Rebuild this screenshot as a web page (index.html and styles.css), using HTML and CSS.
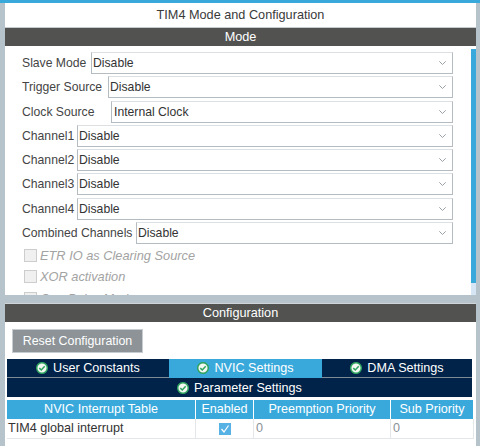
FILE: index.html
```html
<!DOCTYPE html>
<html lang="en">
<head>
<meta charset="utf-8">
<title>TIM4 Mode and Configuration</title>
<link rel="stylesheet" href="styles.css">
</head>
<body>
<div class="window">
  <section class="mode-panel">
    <h1 class="title">TIM4 Mode and Configuration</h1>
    <h2 class="bar">Mode</h2>
    <div class="scroller">
      <div class="form">
        <div class="row"><label class="lbl w-slave">Slave Mode</label><div class="select">Disable<svg class="chev" viewBox="0 0 7 4"><path d="M.3.3 3.500 3.500 6.700.3"/></svg></div></div>
        <div class="row"><label class="lbl w-trigger">Trigger Source</label><div class="select">Disable<svg class="chev" viewBox="0 0 7 4"><path d="M.3.3 3.500 3.500 6.700.3"/></svg></div></div>
        <div class="row"><label class="lbl w-clock">Clock Source</label><div class="select inset">Internal Clock<svg class="chev" viewBox="0 0 7 4"><path d="M.3.3 3.500 3.500 6.700.3"/></svg></div></div>
        <div class="row"><label class="lbl w-channel">Channel1</label><div class="select">Disable<svg class="chev" viewBox="0 0 7 4"><path d="M.3.3 3.500 3.500 6.700.3"/></svg></div></div>
        <div class="row"><label class="lbl w-channel">Channel2</label><div class="select">Disable<svg class="chev" viewBox="0 0 7 4"><path d="M.3.3 3.500 3.500 6.700.3"/></svg></div></div>
        <div class="row"><label class="lbl w-channel">Channel3</label><div class="select">Disable<svg class="chev" viewBox="0 0 7 4"><path d="M.3.3 3.500 3.500 6.700.3"/></svg></div></div>
        <div class="row"><label class="lbl w-channel">Channel4</label><div class="select">Disable<svg class="chev" viewBox="0 0 7 4"><path d="M.3.3 3.500 3.500 6.700.3"/></svg></div></div>
        <div class="row"><label class="lbl w-combined">Combined Channels</label><div class="select">Disable<svg class="chev" viewBox="0 0 7 4"><path d="M.3.3 3.500 3.500 6.700.3"/></svg></div></div>
        <div class="check"><span class="box"></span>ETR IO as Clearing Source</div>
        <div class="check"><span class="box"></span>XOR activation</div>
        <div class="check"><span class="box"></span>One Pulse Mode</div>
      </div>
      <div class="scrollbar"><div class="thumb"></div></div>
    </div>
  </section>
  <section class="config-panel">
    <h2 class="bar">Configuration</h2>
    <button class="reset">Reset Configuration</button>
    <div class="tabs">
      <div class="tab"><svg class="ok" viewBox="0 0 12 12"><circle cx="6" cy="6" r="5.300"/><path d="M3.300 6.100 5.300 8 8.700 4.300"/></svg>User Constants</div>
      <div class="tab active"><svg class="ok" viewBox="0 0 12 12"><circle cx="6" cy="6" r="5.300"/><path d="M3.300 6.100 5.300 8 8.700 4.300"/></svg>NVIC Settings</div>
      <div class="tab"><svg class="ok" viewBox="0 0 12 12"><circle cx="6" cy="6" r="5.300"/><path d="M3.300 6.100 5.300 8 8.700 4.300"/></svg>DMA Settings</div>
      <div class="tab wide"><svg class="ok" viewBox="0 0 12 12"><circle cx="6" cy="6" r="5.300"/><path d="M3.300 6.100 5.300 8 8.700 4.300"/></svg>Parameter Settings</div>
    </div>
    <div class="table">
      <div class="th">NVIC Interrupt Table</div>
      <div class="th">Enabled</div>
      <div class="th">Preemption Priority</div>
      <div class="th">Sub Priority</div>
      <div class="td">TIM4 global interrupt</div>
      <div class="td center"><svg class="tick" viewBox="0 0 12 12"><rect width="12" height="12"/><path d="M2.500 6 5 9 9.500 2.500"/></svg></div>
      <div class="td num">0</div>
      <div class="td num">0</div>
    </div>
  </section>
</div>
</body>
</html>
```
FILE: styles.css
```css
* { box-sizing: border-box; }
html, body { margin: 0; padding: 0; }
body {
  width: 480px;
  height: 446px;
  overflow: hidden;
  background: #b7c3ca;
  font-family: "Liberation Sans", Arial, sans-serif;
  font-size: 12.6px;
  color: #333;
}
.window {
  display: flex;
  flex-direction: column;
  height: 446px;
  padding: 3px 4px 0 5px;
  background: linear-gradient(#39a9dc 3px, #b7c3ca 3px);
}
.mode-panel { background: #fff; height: 292px; display: flex; flex-direction: column; }
.title {
  margin: 0;
  height: 25px;
  line-height: 24px;
  text-align: center;
  font-size: 12.7px;
  font-weight: 400;
  color: #3a3a3a;
  border-bottom: 1px solid #c4ccd0;
}
.bar {
  margin: 0;
  height: 18px;
  line-height: 18px;
  text-align: center;
  font-size: 12.7px;
  font-weight: 400;
  color: #fff;
  background: #525351;
}
.scroller { flex: 1; position: relative; overflow: hidden; display: flex; }
.form { flex: 1; padding: 6px 18px 0 17px; display: flex; flex-direction: column; min-height: 0; }
.row { display: flex; align-items: center; height: 22px; margin-bottom: 2.300px; flex: none; font-size: 12.2px; }
.lbl { color: #444; white-space: nowrap; flex: none; }
.w-slave { width: 69px; }
.w-trigger { width: 86px; }
.w-clock { width: 89px; }
.w-channel { width: 55px; }
.w-combined { width: 114px; }
.select {
  flex: 1;
  height: 22px;
  line-height: 20px;
  border: 1px solid #b5bcc1;
  border-top-color: #dde0e3;
  padding-left: 1px;
  color: #333;
  position: relative;
  background: #fff;
}
.select.inset { padding-left: 2px; }
.chev {
  position: absolute;
  right: 6px;
  top: 8px;
  width: 7px;
  height: 4px;
  fill: none;
  stroke: #9aa1a6;
  stroke-width: 1;
}
.check {
  display: flex;
  align-items: center;
  flex: none;
  height: 21.700px;
  color: #a3a3a3;
  font-style: italic;
  font-size: 12.8px;
  padding-left: 2px;
}
.row + .check { margin-top: -2px; }
.box {
  width: 13px;
  height: 13px;
  margin-right: 3px;
  background: #f0f0f0;
  border: 1px solid #cdcdcd;
}
.scrollbar { width: 5px; margin-top: 3px; background: #d6e6f4; flex: none; }
.thumb { height: 234px; background: #39a9dc; }
.config-panel {
  margin-top: 8px;
  flex: 1;
  background: #fff;
  border-top: 1px solid #cfd5d8;
}
.reset {
  display: block;
  margin: 7px 0 6px 7px;
  width: 131px;
  height: 24px;
  padding: 0;
  border: 1px solid #c6ccd0;
  background: #8d9397;
  color: #fff;
  font: inherit;
  font-size: 12.4px;
}
.tabs {
  display: grid;
  grid-template-columns: 162px 153px 150px;
  margin: 0 3px 0 2px;
  background: #fff;
}
.tab {
  height: 19px;
  display: flex;
  align-items: center;
  justify-content: center;
  gap: 5px;
  background: #012249;
  color: #fff;
  border-bottom: 1px solid #7f8c96;
}
.tab.active { background: #39a9dc; border-bottom-color: #39a9dc; }
.tab.wide { grid-column: 1 / -1; border-bottom: 0; }
.ok { width: 12px; height: 12px; flex: none; }
.ok circle { fill: #f3f8f3; stroke: #2fa35f; stroke-width: 1.500; }
.ok path { fill: none; stroke: #2fa35f; stroke-width: 1.500; }
.table {
  display: grid;
  grid-template-columns: 189px 58px 137px 83px;
  margin: 3px 0 0 2px;
  color: #333;
}
.th {
  height: 19px;
  line-height: 18px;
  text-align: center;
  color: #fff;
  background: #39a9dc;
  border-right: 1px solid #fff;
}
.td {
  height: 20px;
  line-height: 19px;
  border-bottom: 1px solid #e4e7e9;
  border-right: 1px solid #e4e7e9;
  padding-left: 1px;
}
.td.center { display: flex; align-items: center; justify-content: center; }
.td.num { color: #8a9197; padding-left: 2px; }
.tick { width: 12px; height: 12px; }
.tick rect { fill: #56b1e4; }
.tick path { fill: none; stroke: #fff; stroke-width: 1.200; }
```
